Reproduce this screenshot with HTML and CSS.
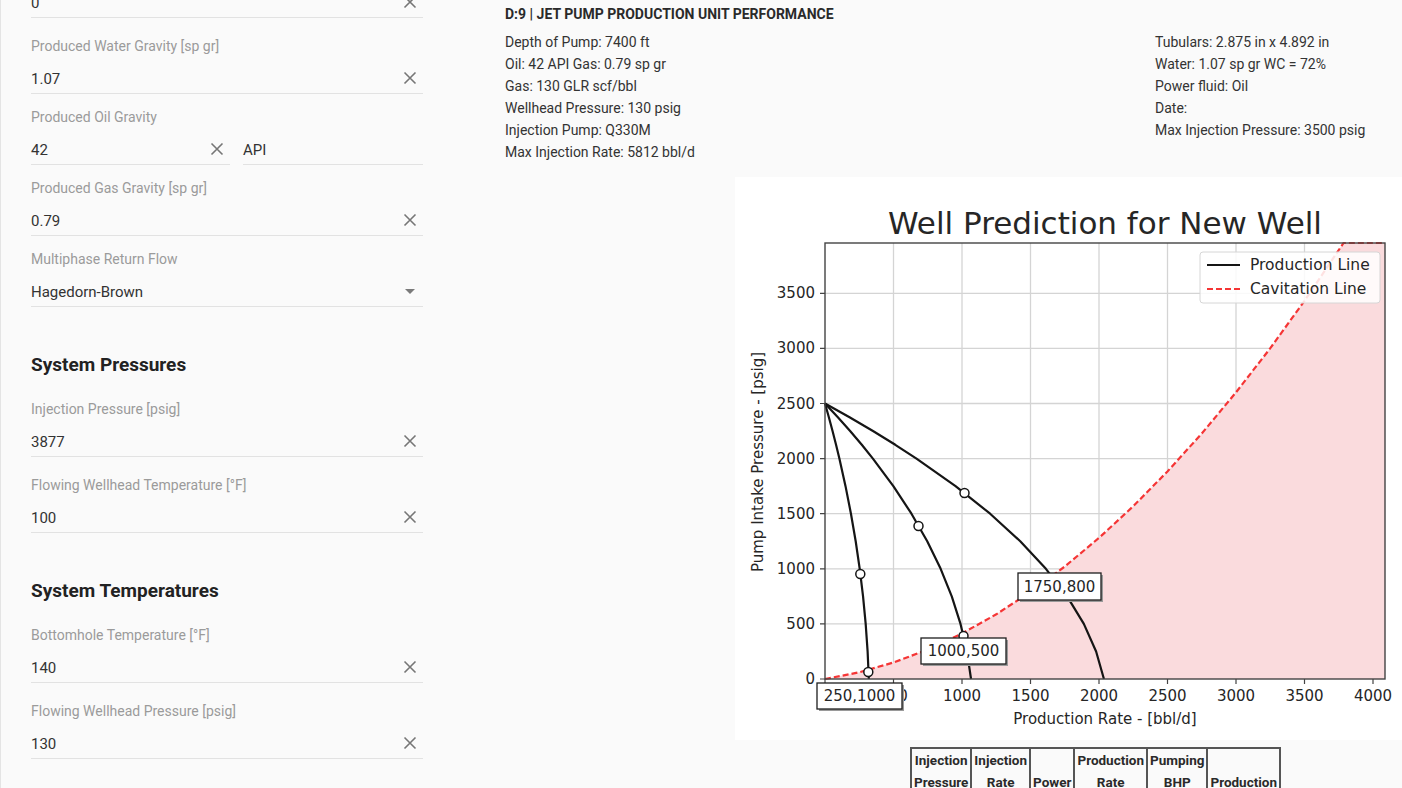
FILE: index.html
```html
<!DOCTYPE html>
<html lang="en">
<head>
<meta charset="utf-8">
<title>Jet Pump Production Unit Performance</title>
<link rel="stylesheet" href="styles.css">
</head>
<body>
<div class="page">
  <aside class="sidebar">
    <div class="row row--first"><span class="value">0</span><svg class="clear" viewBox="0 0 14 14"><path d="M1.5 1.5L12.5 12.5M12.5 1.5L1.5 12.5"/></svg></div>

    <div class="field">
      <div class="label">Produced Water Gravity [sp gr]</div>
      <div class="row"><span class="value">1.07</span><svg class="clear" viewBox="0 0 14 14"><path d="M1.5 1.5L12.5 12.5M12.5 1.5L1.5 12.5"/></svg></div>
    </div>

    <div class="field">
      <div class="label">Produced Oil Gravity</div>
      <div class="split">
        <div class="row row--left"><span class="value">42</span><svg class="clear" viewBox="0 0 14 14"><path d="M1.5 1.5L12.5 12.5M12.5 1.5L1.5 12.5"/></svg></div>
        <div class="row row--right"><span class="value">API</span></div>
      </div>
    </div>

    <div class="field">
      <div class="label">Produced Gas Gravity [sp gr]</div>
      <div class="row"><span class="value">0.79</span><svg class="clear" viewBox="0 0 14 14"><path d="M1.5 1.5L12.5 12.5M12.5 1.5L1.5 12.5"/></svg></div>
    </div>

    <div class="field">
      <div class="label">Multiphase Return Flow</div>
      <div class="row"><span class="value">Hagedorn-Brown</span><svg class="caret" viewBox="0 0 10 5"><path d="M0 0H10L5 5Z"/></svg></div>
    </div>

    <h2 class="section">System Pressures</h2>

    <div class="field field--loose">
      <div class="label">Injection Pressure [psig]</div>
      <div class="row"><span class="value">3877</span><svg class="clear" viewBox="0 0 14 14"><path d="M1.5 1.5L12.5 12.5M12.5 1.5L1.5 12.5"/></svg></div>
    </div>

    <div class="field">
      <div class="label">Flowing Wellhead Temperature [°F]</div>
      <div class="row"><span class="value">100</span><svg class="clear" viewBox="0 0 14 14"><path d="M1.5 1.5L12.5 12.5M12.5 1.5L1.5 12.5"/></svg></div>
    </div>

    <h2 class="section">System Temperatures</h2>

    <div class="field field--loose">
      <div class="label">Bottomhole Temperature [°F]</div>
      <div class="row"><span class="value">140</span><svg class="clear" viewBox="0 0 14 14"><path d="M1.5 1.5L12.5 12.5M12.5 1.5L1.5 12.5"/></svg></div>
    </div>

    <div class="field">
      <div class="label">Flowing Wellhead Pressure [psig]</div>
      <div class="row"><span class="value">130</span><svg class="clear" viewBox="0 0 14 14"><path d="M1.5 1.5L12.5 12.5M12.5 1.5L1.5 12.5"/></svg></div>
    </div>
  </aside>

  <main class="main">
    <h1 class="report-title">D:9 | JET PUMP PRODUCTION UNIT PERFORMANCE</h1>
    <div class="info">
      <div class="info-col info-col--left">
        <div>Depth of Pump: 7400 ft</div>
        <div>Oil: 42 API Gas: 0.79 sp gr</div>
        <div>Gas: 130 GLR scf/bbl</div>
        <div>Wellhead Pressure: 130 psig</div>
        <div>Injection Pump: Q330M</div>
        <div>Max Injection Rate: 5812 bbl/d</div>
      </div>
      <div class="info-col">
        <div>Tubulars: 2.875 in x 4.892 in</div>
        <div>Water: 1.07 sp gr WC = 72%</div>
        <div>Power fluid: Oil</div>
        <div>Date:</div>
        <div>Max Injection Pressure: 3500 psig</div>
      </div>
    </div>

    <div class="chart">
      <svg class="plot" width="667" height="563" viewBox="0 0 667 563">
        <text class="title" x="370" y="46">Well Prediction for New Well</text>

        <g class="grid">
          <path d="M158.5 66V502M227 66V502M295.5 66V502M364 66V502M432.5 66V502M501 66V502M569.5 66V502M638 66V502"/>
          <path d="M90 446.9H650M90 391.8H650M90 336.7H650M90 281.6H650M90 226.5H650M90 171.4H650M90 116.3H650"/>
        </g>

        <polygon class="cav-fill" points="90,502 124.3,495.3 158.5,485.5 192.8,472.6 227,456.5 261.3,437.3 295.5,414.9 329.8,389.5 364,360.9 398.3,329.2 432.5,294.4 466.8,256.5 501,215.4 535.3,171.2 569.5,123.8 608.5,66 650,66 650,502"/>

        <polyline class="cav-line" points="90,502 124.3,495.3 158.5,485.5 192.8,472.6 227,456.5 261.3,437.3 295.5,414.9 329.8,389.5 364,360.9 398.3,329.2 432.5,294.4 466.8,256.5 501,215.4 535.3,171.2 569.5,123.8 608.5,66 650,66"/>

        <polyline class="prod" points="90,226.5 93.86,240.3 97.54,254.05 101.05,267.8 104.38,281.6 110.52,309.15 115.95,336.7 120.69,364.25 124.72,391.8 128.05,419.35 130.68,446.9 132.61,474.45 133.84,502"/>
        <polyline class="prod" points="90,226.5 102.85,240.3 115.12,254.05 126.8,267.8 137.9,281.6 158.35,309.15 176.46,336.7 192.23,364.25 205.66,391.8 216.76,419.35 225.52,446.9 231.95,474.45 236.04,502"/>
        <polyline class="prod" points="90,226.5 114.55,240.3 137.98,254.05 160.29,267.8 181.49,281.6 220.54,309.15 255.13,336.7 285.25,364.25 310.91,391.8 332.11,419.35 348.85,446.9 361.12,474.45 368.93,502"/>

        <g class="pt">
          <circle cx="125.3" cy="397" r="4.5"/>
          <circle cx="133.3" cy="495" r="4.5"/>
          <circle cx="183.5" cy="349" r="4.5"/>
          <circle cx="228.5" cy="459" r="4.5"/>
          <circle cx="229.5" cy="316" r="4.5"/>
        </g>

        <rect class="spine" x="90" y="66" width="560" height="436"/>

        <g class="ticks">
          <path d="M85 502H90M85 446.9H90M85 391.8H90M85 336.7H90M85 281.6H90M85 226.5H90M85 171.4H90M85 116.3H90"/>
          <path d="M90 502V507M158.5 502V507M227 502V507M295.5 502V507M364 502V507M432.5 502V507M501 502V507M569.5 502V507M638 502V507"/>
        </g>

        <g class="ylabels">
          <text x="80" y="502">0</text>
          <text x="80" y="446.9">500</text>
          <text x="80" y="391.8">1000</text>
          <text x="80" y="336.7">1500</text>
          <text x="80" y="281.6">2000</text>
          <text x="80" y="226.5">2500</text>
          <text x="80" y="171.4">3000</text>
          <text x="80" y="116.3">3500</text>
        </g>
        <g class="xlabels">
          <text x="158.5" y="519">500</text>
          <text x="227" y="519">1000</text>
          <text x="295.5" y="519">1500</text>
          <text x="364" y="519">2000</text>
          <text x="432.5" y="519">2500</text>
          <text x="501" y="519">3000</text>
          <text x="569.5" y="519">3500</text>
          <text x="638" y="519">4000</text>
        </g>

        <text class="axis-label" x="370" y="542">Production Rate - [bbl/d]</text>
        <text class="axis-label" transform="translate(23 285) rotate(-90)" x="0" y="0">Pump Intake Pressure - [psig]</text>

        <g class="note">
          <rect class="note-shadow" x="84" y="508" width="85" height="26"/>
          <rect class="note-box" x="82" y="506" width="85" height="26"/>
          <text x="124.5" y="519">250,1000</text>
          <rect class="note-shadow" x="188" y="463" width="85" height="26"/>
          <rect class="note-box" x="186" y="461" width="85" height="26"/>
          <text x="228.5" y="474">1000,500</text>
          <rect class="note-shadow" x="285" y="398" width="83" height="27"/>
          <rect class="note-box" x="283" y="396" width="83" height="27"/>
          <text x="324.5" y="409.5">1750,800</text>
        </g>

        <g class="legend">
          <rect class="legend-box" x="465" y="75" width="180" height="51" rx="3"/>
          <line class="prod" x1="472" y1="88" x2="505" y2="88"/>
          <line class="cav-line" x1="472" y1="112" x2="505" y2="112"/>
          <text x="515" y="88">Production Line</text>
          <text x="515" y="112">Cavitation Line</text>
        </g>
      </svg>
    </div>

    <table class="results">
      <tr>
        <th>Injection<br>Pressure</th>
        <th>Injection<br>Rate</th>
        <th>Power</th>
        <th>Production<br>Rate</th>
        <th>Pumping<br>BHP</th>
        <th class="wide">Production</th>
      </tr>
    </table>
  </main>
</div>
</body>
</html>
```

FILE: styles.css
```css
html, body {
  margin: 0;
  padding: 0;
  width: 1402px;
  height: 788px;
  overflow: hidden;
  background: #fafafa;
}

body {
  font-family: Roboto, "Noto Sans", "Liberation Sans", sans-serif;
  color: #333;
}

.page {
  display: flex;
  align-items: flex-start;
}

/* ---------- sidebar ---------- */
.sidebar {
  width: 440px;
  height: 788px;
  flex: 0 0 440px;
  box-sizing: border-box;
  display: flex;
  flex-direction: column;
  padding: 0 17px 0 30px;
  border-left: 1px solid #e4e4e4;
}

.field {
  display: flex;
  flex-direction: column;
  margin-bottom: 13px;
}

.field--loose {
  margin-bottom: 18px;
}

.label {
  font-size: 14px;
  line-height: 20px;
  height: 20px;
  color: #9b9b9b;
  margin-bottom: 7px;
  white-space: nowrap;
}

.row {
  display: flex;
  align-items: center;
  height: 30px;
  border-bottom: 1px solid #e2e2e2;
}

.row--first {
  margin-top: -13px;
  margin-bottom: 18px;
}

.value {
  flex: 1;
  font-size: 15px;
  color: #333;
  white-space: nowrap;
  padding-top: 1px;
}

.split {
  display: flex;
  gap: 13px;
}

.row--left {
  flex: 0 0 199px;
}

.row--right {
  flex: 1;
}

.clear {
  width: 14px;
  height: 14px;
  margin-right: 6px;
  flex: none;
}

.clear path {
  stroke: #767676;
  stroke-width: 1.6;
  fill: none;
}

.caret {
  width: 10px;
  height: 5px;
  margin-right: 8px;
  flex: none;
}

.caret path {
  fill: #7a7a7a;
}

.section {
  margin: 33px 0 22px 0;
  font-size: 19px;
  line-height: 24px;
  font-weight: 700;
  color: #222;
}

/* ---------- main ---------- */
.main {
  flex: 1;
  display: flex;
  flex-direction: column;
  align-items: flex-start;
  padding: 6px 0 0 65px;
  min-width: 0;
}

.report-title {
  margin: 0 0 9px 0;
  font-size: 14px;
  line-height: 16px;
  font-weight: 700;
  color: #2a2a2a;
}

.info {
  display: flex;
  font-size: 14px;
  line-height: 22px;
  color: #333;
}

.info-col--left {
  width: 650px;
  flex: 0 0 650px;
}

.chart {
  margin: 14px 0 0 230px;
  width: 667px;
  height: 563px;
  background: #fff;
}

.plot {
  display: block;
  font-family: "DejaVu Sans", sans-serif;
}

.plot text {
  fill: #262626;
  font-size: 15px;
}

.plot .title {
  font-size: 31px;
  text-anchor: middle;
  dominant-baseline: central;
}

.grid path {
  stroke: #d4d4d4;
  stroke-width: 1.3;
  fill: none;
}

.cav-fill {
  fill: #fadbdd;
}

.cav-line {
  fill: none;
  stroke: #f53535;
  stroke-width: 2.2;
  stroke-dasharray: 6 3;
}

.prod {
  fill: none;
  stroke: #151515;
  stroke-width: 2.2;
  stroke-linejoin: round;
}

.pt circle {
  fill: #fff;
  stroke: #151515;
  stroke-width: 1.5;
}

.spine {
  fill: none;
  stroke: #444;
  stroke-width: 1.4;
}

.ticks path {
  stroke: #444;
  stroke-width: 1.2;
  fill: none;
}

.ylabels text {
  text-anchor: end;
  dominant-baseline: central;
}

.xlabels text {
  text-anchor: middle;
  dominant-baseline: central;
}

.axis-label {
  text-anchor: middle;
  dominant-baseline: central;
}

.note-shadow {
  fill: #9a9a9a;
}

.note-box {
  fill: #fff;
  stroke: #1e1e1e;
  stroke-width: 1.3;
}

.note text {
  text-anchor: middle;
  dominant-baseline: central;
}

.legend-box {
  fill: #fff;
  fill-opacity: 0.85;
  stroke: #d6d6d6;
  stroke-width: 1;
}

.legend text {
  dominant-baseline: central;
  font-size: 15.5px;
}

/* ---------- table ---------- */
.results {
  margin: 7px 0 0 405px;
  border: 1px solid #555;
  border-collapse: separate;
  border-spacing: 0;
  font-size: 13.5px;
  font-weight: 700;
  color: #2a2a2a;
}

.results th {
  border: 1px solid #555;
  padding: 0 2px;
  line-height: 22px;
  vertical-align: bottom;
  text-align: center;
  font-weight: 700;
}
```
